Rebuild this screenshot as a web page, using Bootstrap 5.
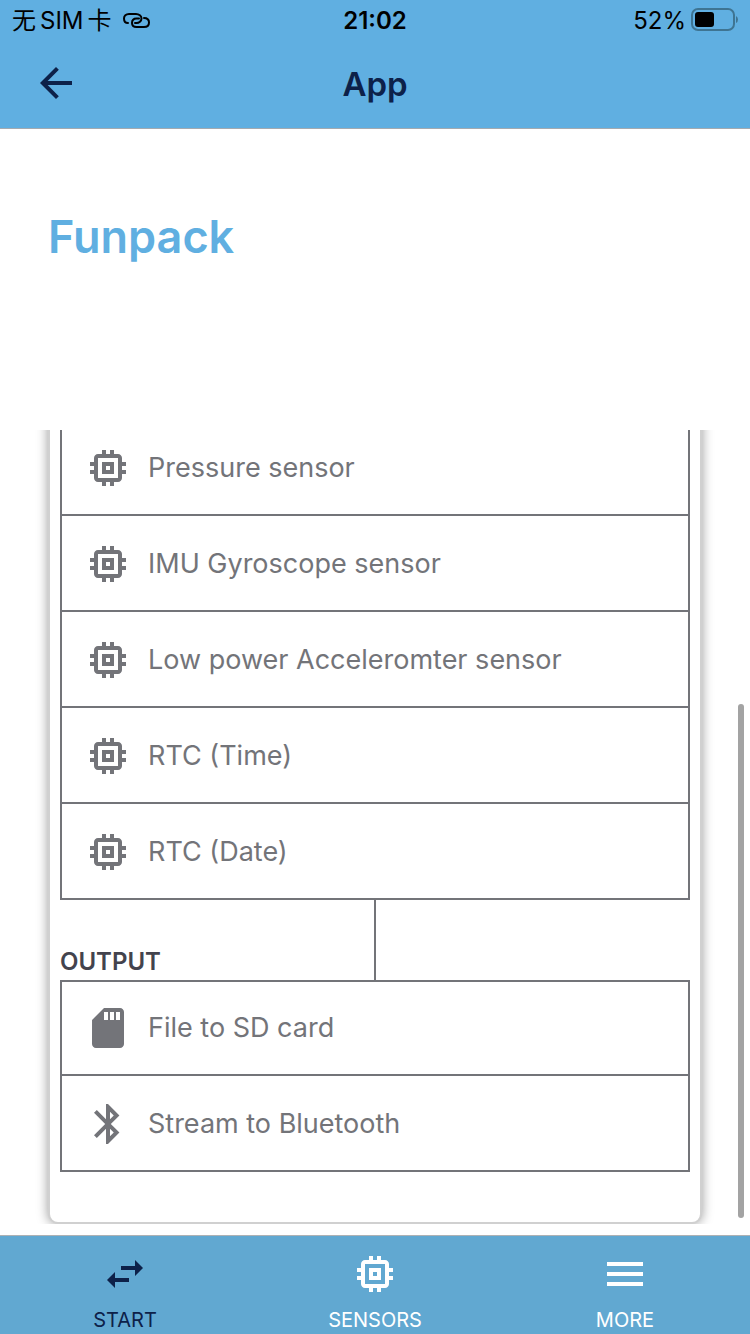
<!DOCTYPE html>
<html lang="en">
<head>
<meta charset="utf-8">
<meta name="viewport" content="width=device-width, initial-scale=1">
<title>Funpack</title>
<link href="https://cdn.jsdelivr.net/npm/bootstrap@5.3.0/dist/css/bootstrap.min.css" rel="stylesheet">
<style>
  :root { --sky: #60afe1; --navy: #0d2149; --steel: #737479; }
  body { font-family: Inter, "Noto Sans CJK SC", sans-serif; background: #fff; color: var(--steel); }
  .top-area { background: var(--sky); border-bottom: 1px solid #a4aab0; }
  .status-bar { height: 40px; font-size: 24px; color: #000; padding: 2px 12px 0; }
  .toolbar { height: 88px; padding: 0 32px; color: var(--navy); }
  .toolbar h1 { font-size: 33px; line-height: 40px; font-weight: 600; }
  .side { flex: 1 1 0; }
  .back-btn { color: inherit; }
  .page-title { font-size: 45px; line-height: 56px; font-weight: 600; color: var(--sky); padding: 80px 48px 165px; }
  .scroller { padding: 0 48px; margin-bottom: 11px; min-height: 0; }
  .flow-card { border: 2px solid #d0d0d0; border-radius: 10px; padding: 10px 10px 50px; box-shadow: 0 0 12px rgba(0,0,0,.4); background: #fff; }
  .flow-box { border: solid var(--steel); border-width: 2px 2px 0; }
  .flow-row { height: 96px; padding: 0 22px; gap: 16px; font-size: 27px; line-height: 40px; border-bottom: 2px solid var(--steel); }
  .flow-row:first-child { height: 94px; }
  .flow-row:not(:first-child) { padding-top: 2px; }
  .link-zone { height: 80px; background: linear-gradient(var(--steel), var(--steel)) center / 2px 100% no-repeat; }
  .link-zone h3 { font-size: 24px; line-height: 36px; font-weight: 600; color: #43434d; }
  .thumb { right: 6px; bottom: 6px; width: 6px; height: 514px; border-radius: 3px; background: #a3a3a3; }
  .tab-area { background: #61a8d1; border-top: 1px solid #adb1b4; height: 99px; }
  .tab-area a { color: #fff; font-size: 20px; line-height: 28px; padding-top: 14px; }
  .tab-area a.active { color: var(--navy); }
  .tab-area svg { margin-bottom: 8px; }
  svg { display: block; flex: none; fill: currentColor; }
</style>
</head>
<body>
<svg width="0" height="0" class="position-absolute" aria-hidden="true">
  <symbol id="chip" viewBox="0 0 24 24"><path d="M15 9H9v6h6V9zm-2 4h-2v-2h2v2zm8-2V9h-2V7c0-1.100-.9-2-2-2h-2V3h-2v2h-2V3H9v2H7c-1.100 0-2 .9-2 2v2H3v2h2v2H3v2h2v2c0 1.100.9 2 2 2h2v2h2v-2h2v2h2v-2h2c1.100 0 2-.9 2-2v-2h2v-2h-2v-2h2zm-4 6H7V7h10v10z"/></symbol>
</svg>
<div class="d-flex flex-column vh-100 overflow-hidden">
  <header class="top-area">
    <div class="status-bar d-flex align-items-center">
      <div class="side d-flex align-items-center">
        <div class="d-flex gap-1"><span>无</span><span>SIM</span><span>卡</span></div>
        <svg class="ms-2" width="32" height="24" viewBox="0 0 32 24" aria-hidden="true"><g fill="none" stroke="#000" stroke-width="2" stroke-linecap="round"><path d="M8 14C5 14 4 12 4 9.500S6 5 9 5h7c3 0 5.500 2 5.500 4.500S19 14 16.500 14H15"/><path d="M19 9.500h-2.500c-3 0-4.500 2-4.500 4.500s2 4 4.500 4H24c3 0 5-1.500 5-4.500s-2-4.500-5-4.500"/></g></svg>
      </div>
      <span class="fw-semibold">21:02</span>
      <div class="side d-flex align-items-center justify-content-end">
        <span>52%</span>
        <svg class="ms-1" width="48" height="26" viewBox="0 0 48 26" aria-hidden="true"><rect x="2" y="1" width="42" height="21" rx="6" fill="none" stroke="#3e7492" stroke-width="2"/><rect x="5" y="4" width="19" height="15" rx="3"/><path d="M46 8q2 1 2 3.500T46 15z" fill="#3e7492"/></svg>
      </div>
    </div>
    <div class="toolbar d-flex align-items-center">
      <div class="side"><button type="button" class="back-btn btn p-0 border-0" aria-label="Back"><svg width="48" height="48" viewBox="0 0 24 24"><path d="M20 10.500H7.830l5.590-5.590L12 3.500l-8 8 8 8 1.410-1.410L7.830 12.500H20v-2z"/></svg></button></div>
      <h1 class="m-0">App</h1>
      <div class="side"></div>
    </div>
  </header>

  <h2 class="page-title m-0">Funpack</h2>

  <main class="scroller flex-fill position-relative overflow-hidden d-flex flex-column justify-content-end">
    <section class="flow-card flex-shrink-0">
      <ul class="flow-box list-unstyled m-0">
        <li class="flow-row d-flex align-items-center"><svg width="48" height="48"><use href="#chip"/></svg>Pressure sensor</li>
        <li class="flow-row d-flex align-items-center"><svg width="48" height="48"><use href="#chip"/></svg>IMU Gyroscope sensor</li>
        <li class="flow-row d-flex align-items-center"><svg width="48" height="48"><use href="#chip"/></svg>Low power Acceleromter sensor</li>
        <li class="flow-row d-flex align-items-center"><svg width="48" height="48"><use href="#chip"/></svg>RTC (Time)</li>
        <li class="flow-row d-flex align-items-center"><svg width="48" height="48"><use href="#chip"/></svg>RTC (Date)</li>
      </ul>
      <div class="link-zone d-flex align-items-end"><h3 class="m-0">OUTPUT</h3></div>
      <ul class="flow-box list-unstyled m-0">
        <li class="flow-row d-flex align-items-center"><svg width="48" height="48" viewBox="0 0 24 24"><path d="M18 2h-8L4.020 8 4 20c0 1.100.9 2 2 2h12c1.100 0 2-.9 2-2V4c0-1.100-.9-2-2-2zm-6 6h-2V4h2v4zm3 0h-2V4h2v4zm3 0h-2V4h2v4z"/></svg>File to SD card</li>
        <li class="flow-row d-flex align-items-center"><svg width="48" height="48" viewBox="0 0 24 24"><path d="M17.710 7.710L12 2h-1v7.590L6.410 5 5 6.410 10.590 12 5 17.590 6.410 19 11 14.410V22h1l5.710-5.710L13.410 12l4.300-4.290zM13 5.830l1.880 1.880L13 9.590V5.830zm1.880 10.460L13 18.170v-3.760l1.880 1.880z"/></svg>Stream to Bluetooth</li>
      </ul>
    </section>
    <div class="thumb position-absolute"></div>
  </main>

  <nav class="tab-area flex-shrink-0">
    <div class="row g-0 text-center h-100">
      <a href="#start" class="col active text-decoration-none d-flex flex-column align-items-center"><svg width="48" height="48" viewBox="0 0 48 48"><path d="M20 16h14v-6l8 8-8 8v-6H20zM28 28H14v-6l-8 8 8 8v-6h14z"/></svg>START</a>
      <a href="#sensors" class="col text-decoration-none d-flex flex-column align-items-center"><svg width="48" height="48"><use href="#chip"/></svg>SENSORS</a>
      <a href="#more" class="col text-decoration-none d-flex flex-column align-items-center"><svg width="48" height="48" viewBox="0 0 48 48"><path d="M6 12h36v4H6zM6 22h36v4H6zM6 32h36v4H6z"/></svg>MORE</a>
    </div>
  </nav>
</div>
<script src="https://cdn.jsdelivr.net/npm/bootstrap@5.3.0/dist/js/bootstrap.bundle.min.js"></script>
</body>
</html>
